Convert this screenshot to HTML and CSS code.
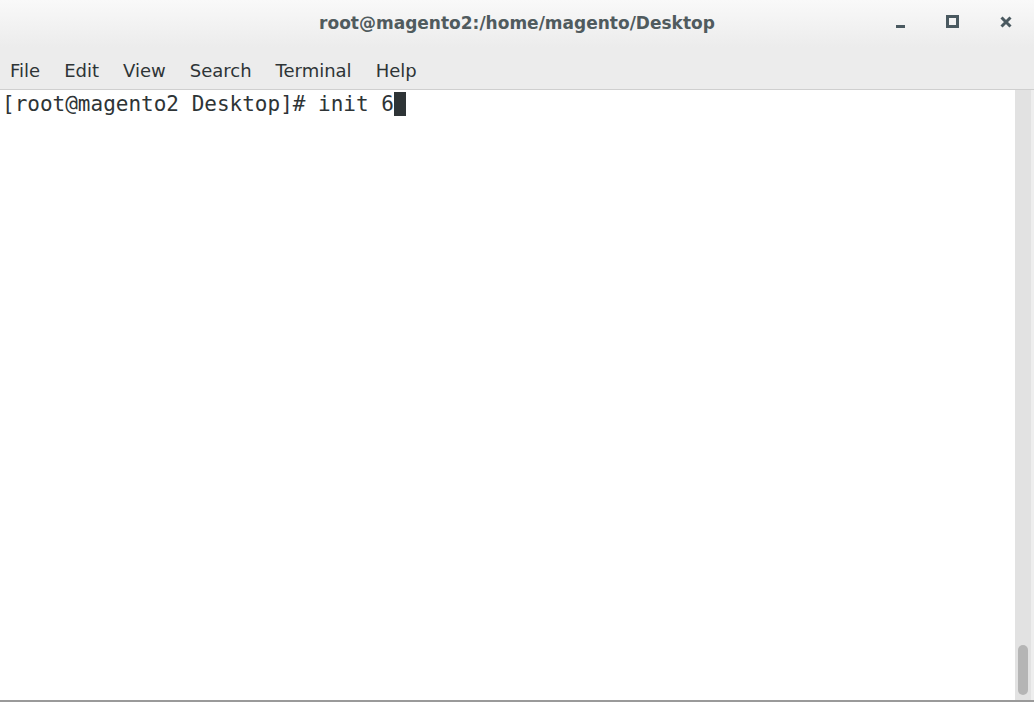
FILE: index.html
```html
<!DOCTYPE html>
<html lang="en">
<head>
  <meta charset="UTF-8">
  <title>root@magento2:/home/magento/Desktop</title>
  <link rel="stylesheet" href="styles.css">
</head>
<body>
  <div class="window">
    <div class="titlebar">
      <span class="title">root@magento2:/home/magento/Desktop</span>
      <div class="controls">
        <span class="ctl ctl-min"></span>
        <span class="ctl ctl-max"></span>
        <svg class="ctl-close" width="12" height="12" viewBox="0 0 12 12">
          <path d="M1.5 1.5 L10.5 10.5 M10.5 1.5 L1.5 10.5" stroke="#4a5960" stroke-width="3"/>
        </svg>
      </div>
    </div>
    <div class="menubar">
      <span>File</span>
      <span>Edit</span>
      <span>View</span>
      <span>Search</span>
      <span>Terminal</span>
      <span>Help</span>
    </div>
    <div class="terminal">
      <div class="screen">
        <div class="line">[root@magento2 Desktop]# init 6<span class="cursor"></span></div>
      </div>
      <div class="scrollbar">
        <div class="thumb"></div>
      </div>
    </div>
  </div>
</body>
</html>
```

FILE: styles.css
```css
html, body {
  margin: 0;
  padding: 0;
  background: #ffffff;
}
.window {
  display: flex;
  flex-direction: column;
  width: 1034px;
  height: 702px;
  overflow: hidden;
  font-family: "DejaVu Sans", sans-serif;
}
.titlebar {
  height: 47px;
  flex-shrink: 0;
  display: flex;
  align-items: center;
  justify-content: center;
  position: relative;
  background: linear-gradient(#f9f9f9, #ececec);
}
.title {
  font-size: 17px;
  font-weight: bold;
  color: #505b5e;
  margin-top: -2px;
}
.controls {
  position: absolute;
  right: 22px;
  top: 15px;
  display: flex;
  align-items: flex-end;
  gap: 41px;
}
.ctl-min {
  width: 9px;
  height: 3px;
  background: #4a5960;
}
.ctl-max {
  width: 7px;
  height: 7px;
  border: 3px solid #4a5960;
}
.ctl-close {
  display: block;
}
.menubar {
  height: 43px;
  flex-shrink: 0;
  display: flex;
  align-items: center;
  gap: 24px;
  padding: 4px 0 0 10px;
  box-sizing: border-box;
  background: #ececec;
  border-bottom: 1px solid #cfcfcf;
  font-size: 18px;
  color: #2e3436;
}
.terminal {
  flex: 1;
  display: flex;
  border-bottom: 2px solid #9a9a9a;
}
.screen {
  flex: 1;
  padding: 2px 0 0 2px;
  font-family: "DejaVu Sans Mono", monospace;
  font-size: 21px;
  color: #2e3436;
}
.line {
  height: 24px;
  line-height: 24px;
  white-space: pre;
  display: flex;
}
.cursor {
  width: 12px;
  height: 24px;
  background: #2e3436;
}
.scrollbar {
  width: 16px;
  background: #e2e2e2;
  border-right: 3px solid #eeeeee;
  display: flex;
  flex-direction: column;
  justify-content: flex-end;
  align-items: center;
  padding-bottom: 5px;
}
.thumb {
  width: 10px;
  height: 50px;
  border-radius: 5px;
  background: #b5b5b5;
}
```
